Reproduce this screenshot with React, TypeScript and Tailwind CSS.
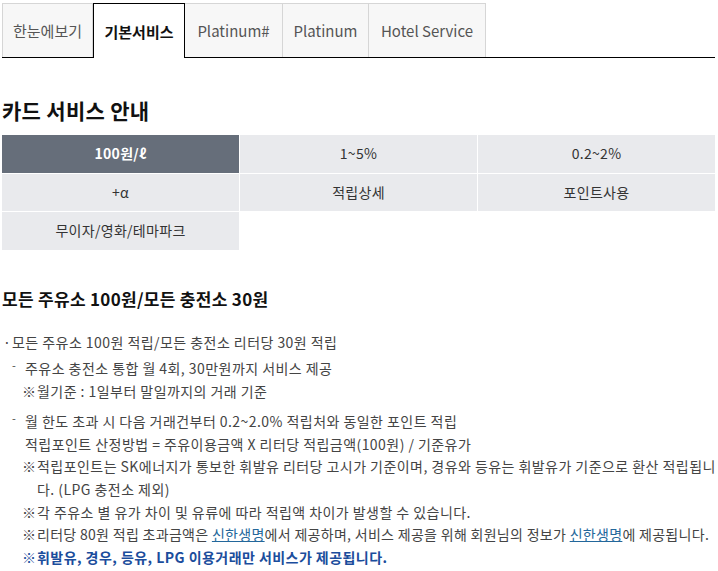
import React from "react";

const tabs = [
  { label: "한눈에보기", w: "w-[91px]" },
  { label: "기본서비스", w: "w-[92px]", active: true },
  { label: "Platinum#", w: "w-[98px]" },
  { label: "Platinum", w: "w-[86px]" },
  { label: "Hotel Service", w: "w-[117px]" },
];

const cells = ["100원/ℓ", "1~5%", "0.2~2%", "+α", "적립상세", "포인트사용", "무이자/영화/테마파크"];

function Note({ children }: { children: React.ReactNode }) {
  return (
    <div className="flex pl-[20px]">
      <span className="w-[15px] shrink-0">※</span>
      <span className="whitespace-nowrap">{children}</span>
    </div>
  );
}

function Dash({ children }: { children: React.ReactNode }) {
  return (
    <div className="flex pl-[10px]">
      <span className="w-[13px] shrink-0 text-[11px] leading-[16px]">-</span>
      <span>{children}</span>
    </div>
  );
}

export default function App() {
  return (
    <div
      className="w-[718px] min-h-[571px] bg-white pl-[2px] pr-[3px] text-[#444]"
      style={{ fontFamily: '"Noto Sans CJK KR", "Noto Sans", sans-serif' }}
    >
      <div className="flex h-[55px] mt-[3px] border-b border-black">
        {tabs.map((t) =>
          t.active ? (
            <div
              key={t.label}
              className={`${t.w} -mb-px flex items-center justify-center border border-b-0 border-black bg-white pt-[2px] text-[15px] font-bold text-[#111]`}
            >
              {t.label}
            </div>
          ) : (
            <div
              key={t.label}
              className={`${t.w} flex items-center justify-center border border-b-0 border-l-0 first:border-l border-[#d6d6d6] bg-[#f7f7f7] pt-[2px] text-[15px] text-[#555]`}
            >
              {t.label}
            </div>
          )
        )}
      </div>

      <h2 className="mt-[37px] text-[21px] leading-[30px] font-bold tracking-[0.3px] text-[#111]">카드 서비스 안내</h2>

      <div className="mt-[10px] grid grid-cols-3 gap-px">
        {cells.map((c, i) => (
          <div
            key={c}
            className={`h-[37.5px] flex items-center justify-center text-[14px] tracking-[0.3px] ${
              i === 0 ? "bg-[#666e7a] text-white font-bold" : "bg-[#e9eaed] text-[#333]"
            }`}
          >
            {c}
          </div>
        ))}
      </div>

      <h3 className="mt-[37px] text-[17px] leading-[24px] font-bold tracking-[0.3px] text-[#111]">모든 주유소 100원/모든 충전소 30원</h3>

      <div className="mt-[20px] text-[14px] leading-[22.6px] tracking-[0.45px]">
        <div className="flex">
          <span className="w-[10px] shrink-0 pl-[1px]">·</span>
          <span>모든 주유소 100원 적립/모든 충전소 리터당 30원 적립</span>
        </div>

        <div className="mt-[4px]">
          <Dash>주유소 충전소 통합 월 4회, 30만원까지 서비스 제공</Dash>
          <Note>월기준 : 1일부터 말일까지의 거래 기준</Note>
        </div>

        <div className="mt-[8px]">
          <Dash>
            월 한도 초과 시 다음 거래건부터 0.2~2.0% 적립처와 동일한 포인트 적립
            <br />
            적립포인트 산정방법 = 주유이용금액 X 리터당 적립금액(100원) / 기준유가
          </Dash>
          <Note>
            적립포인트는 SK에너지가 통보한 휘발유 리터당 고시가 기준이며, 경유와 등유는 휘발유가 기준으로 환산 적립됩니
            <br />
            다. (LPG 충전소 제외)
          </Note>
          <Note>각 주유소 별 유가 차이 및 유류에 따라 적립액 차이가 발생할 수 있습니다.</Note>
          <div className="flex pl-[20px] tracking-[0.3px]">
            <span className="w-[15px] shrink-0">※</span>
            <span className="whitespace-nowrap">
              리터당 80원 적립 초과금액은 <span className="text-[#23679b] underline">신한생명</span>에서 제공하며, 서비스 제공을 위해 회원님의 정보가{" "}
              <span className="text-[#23679b] underline">신한생명</span>에 제공됩니다.
            </span>
          </div>
          <div className="flex pl-[20px] font-bold text-[#1b4d9c]">
            <span className="w-[15px] shrink-0">※</span>
            <span>휘발유, 경우, 등유, LPG 이용거래만 서비스가 제공됩니다.</span>
          </div>
        </div>
      </div>
    </div>
  );
}
